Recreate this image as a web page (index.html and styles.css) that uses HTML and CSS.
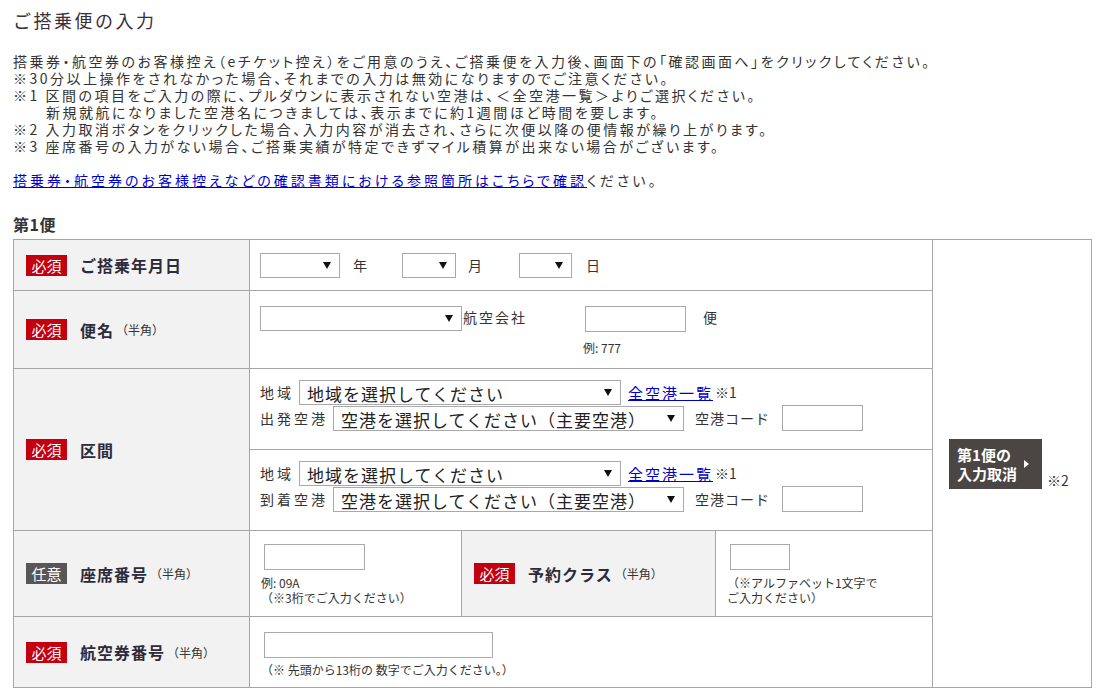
FILE: index.html
```html
<!DOCTYPE html>
<html lang="ja">
<head>
<meta charset="utf-8">
<title>ご搭乗便の入力</title>
<link rel="stylesheet" href="styles.css">
</head>
<body>
<div class="page">
  <h1 class="title">ご搭乗便の入力</h1>
  <div class="intro">
    <p>搭乗券・航空券のお客様控え（eチケット控え）をご用意のうえ、ご搭乗便を入力後、画面下の「確認画面へ」をクリックしてください。</p>
    <p>※30分以上操作をされなかった場合、それまでの入力は無効になりますのでご注意ください。</p>
    <p>※1 区間の項目をご入力の際に、プルダウンに表示されない空港は、＜全空港一覧＞よりご選択ください。</p>
    <p class="indent">新規就航になりました空港名につきましては、表示までに約1週間ほど時間を要します。</p>
    <p>※2 入力取消ボタンをクリックした場合、入力内容が消去され、さらに次便以降の便情報が繰り上がります。</p>
    <p>※3 座席番号の入力がない場合、ご搭乗実績が特定できずマイル積算が出来ない場合がございます。</p>
  </div>
  <p class="ref"><a href="#">搭乗券・航空券のお客様控えなどの確認書類における参照箇所はこちらで確認</a>ください。</p>

  <h2 class="flight-title">第1便</h2>
  <table class="form">
    <colgroup>
      <col class="c-label">
      <col class="c-seat">
      <col class="c-label2">
      <col class="c-class">
      <col class="c-side">
    </colgroup>
    <tr class="r-date">
      <th><span class="badge req">必須</span><span class="lbl">ご搭乗年月日</span></th>
      <td colspan="3">
        <div class="line">
          <span class="sel w-year"><select><option></option></select></span><span class="unit u-year">年</span>
          <span class="sel w-month"><select><option></option></select></span><span class="unit u-month">月</span>
          <span class="sel w-day"><select><option></option></select></span><span class="unit">日</span>
        </div>
      </td>
      <td rowspan="6" class="side">
        <span class="cancel-wrap"><button class="cancel" type="button"><span class="cancel-text">第1便の<br>入力取消</span><span class="arrow"></span></button><span class="note2">※2</span></span>
      </td>
    </tr>
    <tr class="r-flight">
      <th><span class="badge req">必須</span><span class="lbl">便名</span><span class="sub">（半角）</span></th>
      <td colspan="3">
        <div class="flight-grid">
          <span class="sel w-airline"><select><option></option></select></span>
          <span class="unit u-airline">航空会社</span>
          <div class="fno">
            <input class="in w-fno" type="text">
            <span class="hint">例: 777</span>
          </div>
          <span class="unit u-bin">便</span>
        </div>
      </td>
    </tr>
    <tr class="r-sect">
      <th rowspan="2"><span class="badge req">必須</span><span class="lbl">区間</span></th>
      <td colspan="3" class="sect">
        <div class="line">
          <span class="slbl">地域</span><span class="sel big w-area"><select><option>地域を選択してください</option></select></span><a href="#" class="all">全空港一覧</a><span class="n1">※1</span>
        </div>
        <div class="line">
          <span class="slbl">出発空港</span><span class="sel big w-port"><select><option>空港を選択してください（主要空港）</option></select></span><span class="unit code">空港コード</span><input class="in w-code" type="text">
        </div>
      </td>
    </tr>
    <tr class="r-sect">
      <td colspan="3" class="sect">
        <div class="line">
          <span class="slbl">地域</span><span class="sel big w-area"><select><option>地域を選択してください</option></select></span><a href="#" class="all">全空港一覧</a><span class="n1">※1</span>
        </div>
        <div class="line">
          <span class="slbl">到着空港</span><span class="sel big w-port"><select><option>空港を選択してください（主要空港）</option></select></span><span class="unit code">空港コード</span><input class="in w-code" type="text">
        </div>
      </td>
    </tr>
    <tr class="r-seat">
      <th><span class="badge opt">任意</span><span class="lbl">座席番号</span><span class="sub">（半角）</span></th>
      <td class="pad">
        <input class="in w-seat" type="text">
        <span class="hint">例: 09A<br>（※3桁でご入力ください）</span>
      </td>
      <th><span class="badge req">必須</span><span class="lbl">予約クラス</span><span class="sub">（半角）</span></th>
      <td class="pad">
        <input class="in w-cls" type="text">
        <span class="hint">（※アルファベット1文字で<br>ご入力ください）</span>
      </td>
    </tr>
    <tr class="r-ticket">
      <th><span class="badge req">必須</span><span class="lbl">航空券番号</span><span class="sub">（半角）</span></th>
      <td colspan="3" class="pad">
        <input class="in w-ticket" type="text">
        <span class="hint">（※ 先頭から13桁の 数字でご入力ください。）</span>
      </td>
    </tr>
  </table>
</div>
</body>
</html>
```

FILE: styles.css
```css
* { box-sizing: border-box; }
html, body { margin: 0; padding: 0; background: #fff; }
body {
  font-family: "Noto Sans CJK JP", "Noto Sans", sans-serif;
  color: #333;
  font-size: 14px;
}
.page { padding: 8px 6px 0 13px; }
.title {
  margin: 0;
  font-size: 18px;
  line-height: 24px;
  font-weight: normal;
  letter-spacing: 2.5px;
  color: #3a2f3c;
}
.intro { margin-top: 21px; }
.intro p {
  margin: 0;
  font-size: 14px;
  line-height: 17px;
  letter-spacing: 2.5px;
  font-feature-settings: "palt";
  white-space: nowrap;
}
.intro p.indent { padding-left: 33px; }
.ref {
  margin: 17px 0 0;
  font-size: 14px;
  line-height: 17px;
  letter-spacing: 3px;
  font-feature-settings: "palt";
}
.ref a { color: #0000cc; text-decoration: underline; }
.flight-title {
  margin: 25px 0 0;
  font-size: 16px;
  line-height: 20px;
  font-weight: bold;
  letter-spacing: 0.5px;
  color: #333;
}
.form {
  margin-top: 5px;
  width: 1078px;
  border-collapse: collapse;
  table-layout: fixed;
}
.c-label { width: 236px; }
.c-seat { width: 212px; }
.c-label2 { width: 254px; }
.c-class { width: 217px; }
.c-side { width: 159px; }
.form th, .form td {
  border: 1px solid #a6a6a6;
  vertical-align: middle;
  padding: 0;
}
.form th {
  background: #f2f2f2;
  text-align: left;
  font-weight: normal;
  padding-left: 12px;
  white-space: nowrap;
}
.form td { padding: 0 10px; }
.r-date { height: 51px; }
.r-flight { height: 78px; }
.r-sect { height: 81px; }
.r-seat { height: 86px; }
.r-ticket { height: 71px; }

.badge {
  display: inline-block;
  width: 41px;
  height: 21px;
  line-height: 21px;
  text-align: center;
  color: #fff;
  font-size: 15px;
  vertical-align: middle;
}
.badge.req { background: #c30010; }
.badge.opt { background: #595657; }
.lbl {
  display: inline-block;
  vertical-align: middle;
  margin-left: 13px;
  font-size: 16px;
  font-weight: bold;
  letter-spacing: 1px;
  color: #2d2a3a;
}
.sub {
  display: inline-block;
  vertical-align: middle;
  font-size: 12px;
  color: #333;
  margin-left: 2px;
}

.line {
  display: flex;
  align-items: center;
}
.unit {
  font-size: 14px;
  letter-spacing: 2px;
  color: #333;
  white-space: nowrap;
}
.slbl {
  font-size: 14px;
  letter-spacing: 3px;
  color: #333;
  white-space: nowrap;
  margin-right: 5px;
}
.sel {
  position: relative;
  display: inline-block;
  height: 25px;
}
.sel select {
  appearance: none;
  -webkit-appearance: none;
  width: 100%;
  height: 100%;
  margin: 0;
  border: 1px solid #a9a9a9;
  border-radius: 0;
  background: #fff;
  font-family: inherit;
  font-size: 14px;
  color: #111;
  padding: 0 20px 0 5px;
}
.sel::after {
  content: "";
  position: absolute;
  right: 9px;
  top: 9px;
  width: 0;
  height: 0;
  border-left: 4px solid transparent;
  border-right: 4px solid transparent;
  border-top: 7px solid #111;
  pointer-events: none;
}
.w-year { width: 80px; margin-right: 13px; }
.u-year { margin-right: 33px; }
.w-month { width: 54px; margin-right: 12px; }
.u-month { margin-right: 35px; }
.w-day { width: 53px; margin-right: 14px; }

.flight-grid {
  display: flex;
  align-items: flex-start;
  padding-top: 2px;
}
.w-airline { width: 202px; }
.u-airline { margin-left: 1px; margin-top: 1px; width: 122px; }
.fno { display: flex; flex-direction: column; align-items: flex-start; }
.w-fno { width: 101px; }
.fno .hint { margin-top: 8px; margin-left: -2px; }
.u-bin { margin-left: 17px; margin-top: 1px; }

.in {
  display: block;
  height: 26px;
  border: 1px solid #a9a9a9;
  border-radius: 0;
  background: #fff;
  margin: 0;
  padding: 0 4px;
  font-family: inherit;
}
.hint {
  display: block;
  font-size: 12px;
  line-height: 15px;
  color: #333;
}

.form td.sect { padding: 10px 10px 0; vertical-align: top; }
.sect .line { height: 26px; }
.sel.big select {
  font-size: 17px;
  letter-spacing: 1px;
  color: #222;
  padding-left: 7px;
}
.w-area { width: 322px; }
.w-port { width: 351px; }
.all {
  margin-left: 7px;
  color: #0000cc;
  text-decoration: underline;
  font-size: 15px;
  letter-spacing: 2px;
}
.n1 { margin-left: 2px; font-size: 14px; }
.code { margin-left: 11px; margin-right: 12px; letter-spacing: 1px; }
.w-code { width: 81px; }

.form td.pad { padding: 0 14px; }
.pad .hint { margin-left: -3px; }
.w-seat { width: 101px; margin-top: 2px; }
.r-seat .hint { margin-top: 5px; }
.w-cls { width: 60px; margin-top: 2px; }
.w-ticket { width: 229px; margin-top: 4px; }
.r-ticket .hint { margin-top: 4px; }

.form td.side { text-align: center; padding: 0; }
.cancel-wrap { display: inline-flex; align-items: flex-end; margin-right: 6px; }
.cancel {
  display: inline-flex;
  align-items: center;
  width: 93px;
  height: 50px;
  background: #4b4643;
  border: none;
  border-radius: 0;
  padding: 0 0 0 8px;
  margin: 0;
  color: #fff;
  font-family: inherit;
  text-align: left;
  cursor: pointer;
}
.cancel-text {
  font-size: 15px;
  line-height: 19px;
  font-weight: bold;
}
.arrow {
  margin-left: 7px;
  width: 0;
  height: 0;
  border-top: 4px solid transparent;
  border-bottom: 4px solid transparent;
  border-left: 5px solid #fff;
}
.note2 {
  margin-left: 5px;
  font-size: 14px;
  line-height: 17px;
}
```
